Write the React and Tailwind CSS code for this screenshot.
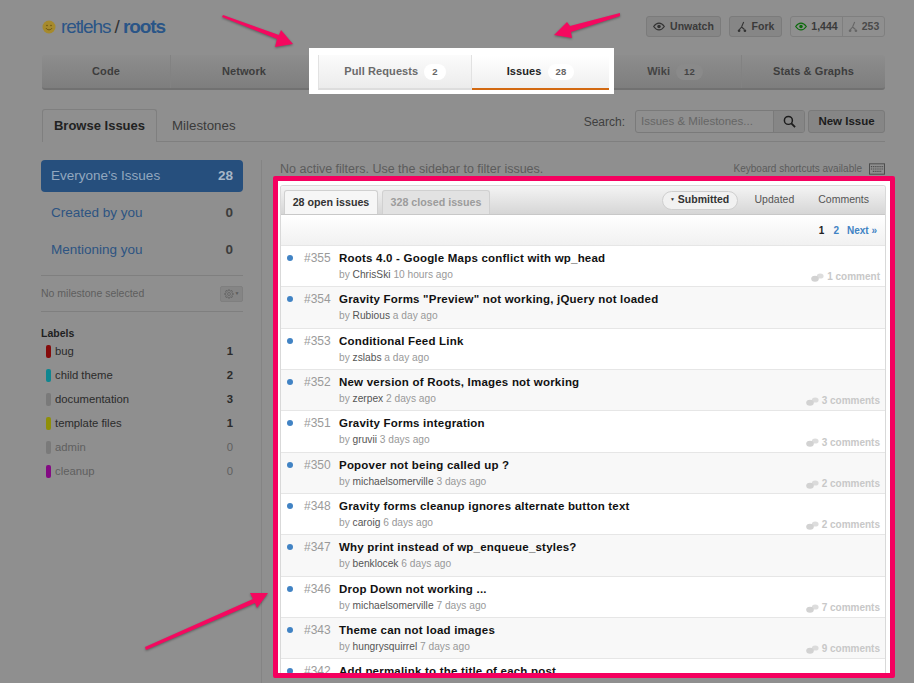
import { GoGear } from 'react-icons/go';

const issues = [
  { num: '#355', title: 'Roots 4.0 - Google Maps conflict with wp_head', by: 'ChrisSki', when: '10 hours ago', comments: '1 comment' },
  { num: '#354', title: 'Gravity Forms "Preview" not working, jQuery not loaded', by: 'Rubious', when: 'a day ago' },
  { num: '#353', title: 'Conditional Feed Link', by: 'zslabs', when: 'a day ago' },
  { num: '#352', title: 'New version of Roots, Images not working', by: 'zerpex', when: '2 days ago', comments: '3 comments' },
  { num: '#351', title: 'Gravity Forms integration', by: 'gruvii', when: '3 days ago', comments: '3 comments' },
  { num: '#350', title: 'Popover not being called up ?', by: 'michaelsomerville', when: '3 days ago', comments: '2 comments' },
  { num: '#348', title: 'Gravity forms cleanup ignores alternate button text', by: 'caroig', when: '6 days ago', comments: '2 comments' },
  { num: '#347', title: 'Why print instead of wp_enqueue_styles?', by: 'benklocek', when: '6 days ago' },
  { num: '#346', title: 'Drop Down not working ...', by: 'michaelsomerville', when: '7 days ago', comments: '7 comments' },
  { num: '#343', title: 'Theme can not load images', by: 'hungrysquirrel', when: '7 days ago', comments: '9 comments' },
  { num: '#342', title: 'Add permalink to the title of each post.' },
];

const labels = [
  { name: 'bug', count: 1, bar: 'bg-[#850b0b]' },
  { name: 'child theme', count: 2, bar: 'bg-[#0f8690]' },
  { name: 'documentation', count: 3, bar: 'bg-[#7a7a7a]' },
  { name: 'template files', count: 1, bar: 'bg-[#8f8f08]' },
  { name: 'admin', count: 0, bar: 'bg-[#7a7a7a]' },
  { name: 'cleanup', count: 0, bar: 'bg-[#830a83]' },
];

function EyeIcon({ className }) {
  return (
    <svg viewBox="0 0 14 10" className={className} fill="none">
      <path d="M0.8 5C3 1.8 5 1 7 1s4 .8 6.2 4C11 8.2 9 9 7 9S3 8.2.8 5z" stroke="currentColor" strokeWidth="1.4" />
      <circle cx="7" cy="5" r="2" fill="currentColor" />
    </svg>
  );
}

function ForkIcon({ className }) {
  return (
    <svg viewBox="0 0 12 14" className={className} fill="none" stroke="currentColor">
      <path d="M8 1 5.5 7 2.5 10.5M5.5 7 9 10" strokeWidth="1.3" />
      <circle cx="2.5" cy="11.5" r="1.6" fill="currentColor" stroke="none" />
      <circle cx="9.5" cy="11.5" r="1.6" fill="currentColor" stroke="none" />
    </svg>
  );
}

function CommentIcon() {
  return (
    <svg viewBox="0 0 13 9" className="w-[13px] h-[9px] text-[#d2d2d2]" fill="currentColor">
      <ellipse cx="4" cy="5.8" rx="3.8" ry="3" />
      <ellipse cx="9.2" cy="3" rx="3.4" ry="2.6" opacity="0.75" />
    </svg>
  );
}

function Badge({ children, dim }) {
  return (
    <span className={`ml-[6px] h-[16px] px-[8px] rounded-full text-[9.5px] font-bold leading-[16px] ${dim ? 'bg-[#8a8a8a] text-[#444444]' : 'bg-white text-[#666666]'}`}>
      {children}
    </span>
  );
}

function NavTab({ width, children, last }) {
  return (
    <div className={`flex items-center justify-center h-full text-[11px] tracking-[0.1px] font-bold text-[#3d3d3d] ${width} ${last ? '' : 'border-r border-[#828282]'}`}>
      {children}
    </div>
  );
}

function SideLink({ label, count, active }) {
  return (
    <div className={`flex items-center justify-between h-[32px] px-[10px] rounded-[4px] text-[13.5px] ${active ? 'bg-[#264f7d] text-[#93a8bf]' : 'text-[#2d5482]'}`}>
      <span>{label}</span>
      <span className={`font-bold ${active ? 'text-[#a7b6c7]' : 'text-[#3c3c3c]'}`}>{count}</span>
    </div>
  );
}

function IssueRow({ issue, odd }) {
  return (
    <div className={`flex h-[41.35px] shrink-0 border-b border-[#e6e6e6] ${odd ? 'bg-[#f8f8f8]' : 'bg-white'}`}>
      <div className="w-[23px] shrink-0 pl-[6px] pt-[9px]">
        <div className="w-[6px] h-[6px] rounded-full bg-[#4183c4]" />
      </div>
      <div className="w-[35px] shrink-0 pt-[4px] text-[12px] leading-[16px] text-[#9a9a9a]">{issue.num}</div>
      <div className="flex-1 pt-[4px]">
        <div className="text-[11.5px] leading-[17px] font-bold text-[#111111] tracking-[0.21px]">{issue.title}</div>
        {issue.by && (
          <div className="text-[10.2px] leading-[15px] text-[#999999]">
            by <span className="text-[#555555]">{issue.by}</span> {issue.when}
          </div>
        )}
      </div>
      {issue.comments && (
        <div className="self-end pb-[2px] pr-[5px] flex items-center gap-[3px] text-[10px] leading-[14px] font-bold text-[#c8c8c8]">
          <CommentIcon />
          {issue.comments}
        </div>
      )}
    </div>
  );
}

export default function App() {
  return (
    <div className="relative w-[914px] h-[683px] overflow-hidden bg-[#8f8f8f] font-['Liberation_Sans',Arial,sans-serif]">
      <div className="pl-[42px] pr-[29px]">
        {/* repo title and buttons */}
        <div className="flex items-center justify-between pt-[16px] h-[37px]">
          <div className="flex items-center">
            <svg viewBox="0 0 14 14" className="w-[14px] h-[14px]">
              <circle cx="7" cy="7" r="6.5" fill="#a68a2c" />
              <path d="M4 8c1 2.4 5 2.4 6 0" stroke="#6b5512" strokeWidth="1" fill="none" />
              <circle cx="5" cy="5.5" r="0.8" fill="#6b5512" />
              <circle cx="9" cy="5.5" r="0.8" fill="#6b5512" />
            </svg>
            <div className="ml-[5px] text-[19px] leading-[22px] tracking-[-1.1px] text-[#2a5587]">
              retlehs <span className="text-[#333333]">/</span> <span className="font-bold">roots</span>
            </div>
          </div>
          <div className="flex items-center text-[10.5px] font-bold text-[#3a3a3a]">
            <div className="flex items-center gap-[5px] h-[21px] w-[75px] justify-center rounded-[3px] border border-[#7b7b7b] bg-[#868686]">
              <EyeIcon className="w-[12px] h-[9px] text-[#333333]" />
              Unwatch
            </div>
            <div className="flex items-center gap-[5px] h-[21px] w-[53px] justify-center rounded-[3px] border border-[#7b7b7b] bg-[#868686] ml-[8px]">
              <ForkIcon className="w-[10px] h-[12px] text-[#333333]" />
              Fork
            </div>
            <div className="flex items-center h-[21px] w-[95px] rounded-[3px] border border-[#7f7f7f] ml-[8px]">
              <div className="flex items-center justify-center gap-[4px] w-[52px] h-full border-r border-[#7f7f7f]">
                <EyeIcon className="w-[12px] h-[9px] text-[#0c6b0c]" />
                1,444
              </div>
              <div className="flex items-center justify-center gap-[4px] flex-1 text-[#4a4a4a]">
                <ForkIcon className="w-[10px] h-[12px] text-[#666666]" />
                253
              </div>
            </div>
          </div>
        </div>

        {/* main nav */}
        <div className="flex h-[35px] mt-[18px] rounded-[3px] border-b-2 border-[#717171] bg-gradient-to-b from-[#8d8d8d] to-[#7e7e7e]">
          <NavTab width="w-[129px]">Code</NavTab>
          <NavTab width="w-[147px]">Network</NavTab>
          <div className="relative z-10 flex self-start h-[46px] -mt-[7px] -ml-[9px] -mr-[5px] pt-[7px] pl-[9px] pr-[5px] bg-white">
            <div className="flex items-center justify-center w-[154px] h-[35px] text-[11px] tracking-[0.1px] font-bold text-[#6a6a6a] bg-gradient-to-b from-[#fbfbfb] to-[#ececec] border-x border-[#e2e2e2] border-b-2 border-b-[#dddddd]">
              Pull Requests
              <Badge>2</Badge>
            </div>
            <div className="flex items-center justify-center w-[137px] h-[35px] text-[11px] tracking-[0.1px] font-bold text-[#222222] bg-gradient-to-b from-[#ffffff] to-[#efefef] border-b-2 border-[#d26911]">
              Issues
              <Badge>28</Badge>
            </div>
          </div>
          <NavTab width="w-[133px]">
            <span className="text-[#444444]">Wiki</span>
            <Badge dim>12</Badge>
          </NavTab>
          <NavTab width="flex-1" last>Stats &amp; Graphs</NavTab>
        </div>

        {/* sub tabs and search */}
        <div className="flex items-end h-[52px] border-b border-[#7f7f7f]">
          <div className="flex items-center justify-center w-[115px] h-[33px] -mb-px border border-b-0 border-[#7f7f7f] bg-[#8f8f8f] rounded-t-[3px] text-[13px] font-bold text-[#222222]">
            Browse Issues
          </div>
          <div className="ml-[15px] h-[32px] leading-[34px] text-[13.3px] text-[#3a3a3a]">Milestones</div>
          <div className="ml-auto self-start mt-[20px] flex items-center">
            <span className="mr-[10px] text-[12px] text-[#3f3f3f]">Search:</span>
            <div className="flex w-[170px] h-[23px] rounded-[3px] border border-[#7a7a7a] overflow-hidden">
              <div className="flex-1 pl-[5px] text-[11.5px] leading-[21px] text-[#666666]">Issues &amp; Milestones...</div>
              <div className="flex items-center justify-center w-[31px] border-l border-[#7a7a7a] bg-[#868686]">
                <svg viewBox="0 0 14 14" className="w-[13px] h-[13px]" fill="none" stroke="#1c1c1c">
                  <circle cx="5.8" cy="5.8" r="4.3" strokeWidth="1.6" />
                  <path d="M9 9l4 4" strokeWidth="2" />
                </svg>
              </div>
            </div>
            <div className="ml-[3px] flex items-center justify-center w-[77px] h-[23px] rounded-[3px] border border-[#7a7a7a] bg-[#868686] text-[11.5px] font-bold text-[#1c1c1c]">
              New Issue
            </div>
          </div>
        </div>
      </div>

      <div className="flex pl-[41px] pt-[18px]">
        {/* sidebar */}
        <div className="w-[202px] shrink-0">
          <SideLink label="Everyone's Issues" count="28" active />
          <div className="mt-[5px]"><SideLink label="Created by you" count="0" /></div>
          <div className="mt-[5px]"><SideLink label="Mentioning you" count="0" /></div>
          <div className="mt-[9px] flex items-center justify-between h-[37px] border-y border-[#7f7f7f] text-[10.5px] text-[#5e5e5e]">
            No milestone selected
            <div className="flex items-center justify-center gap-[1px] w-[23px] h-[16px] rounded-[2px] border border-[#7f7f7f] bg-[#858585] text-[#5a5a5a]">
              <GoGear className="w-[10px] h-[10px]" />
              <span className="text-[5px]">▼</span>
            </div>
          </div>
          <div className="mt-[14px] text-[10.5px] leading-[14px] font-bold text-[#1f1f1f]">Labels</div>
          <div className="-mt-px">
            {labels.map((label) => (
              <div key={label.name} className="flex items-center h-[24px] text-[11.3px]">
                <span className={`ml-[5px] w-[5px] h-[13px] rounded-[2px] ${label.bar}`} />
                <span className={`ml-[4px] flex-1 ${label.count ? 'text-[#2b2b2b]' : 'text-[#5f5f5f]'}`}>{label.name}</span>
                <span className={`mr-[10px] ${label.count ? 'font-bold text-[#2b2b2b]' : 'text-[#5f5f5f]'}`}>{label.count}</span>
              </div>
            ))}
          </div>
        </div>

        <div className="ml-[18px] w-px h-[540px] bg-[#848484]" />

        {/* issues column */}
        <div className="ml-[18px] flex flex-col">
          <div className="flex items-center justify-between w-[605px] h-[17px] text-[#5c5c5c]">
            <span className="text-[12.5px] pt-[1px]">No active filters. Use the sidebar to filter issues.</span>
            <span className="flex items-center gap-[7px] text-[10px]">
              Keyboard shortcuts available
              <svg viewBox="0 0 17 12" className="w-[16px] h-[12px]" fill="none" stroke="#4a4a4a">
                <rect x="0.5" y="0.5" width="16" height="11" />
                <path d="M2 3.5h13M2 6h13M4 8.5h9" strokeWidth="1.2" strokeDasharray="1.2 0.8" />
              </svg>
            </span>
          </div>

          {/* highlighted issue list */}
          <div className="-ml-[7px] mt-[-1px] w-[622px] h-[502px] rounded-[2px] border-[5px] border-[#f5005f] bg-white pl-[2px] pr-[4px] pt-[4px] overflow-hidden">
            <div className="h-full rounded-t-[3px] border-x border-t border-[#d9d9d9] flex flex-col overflow-hidden">
              <div className="flex items-end shrink-0 h-[29px] pl-[3px] pr-[16px] bg-gradient-to-b from-[#f4f4f4] to-[#d6d6d6] border-b border-[#c8c8c8]">
                <div className="flex items-center justify-center w-[94px] h-[24px] rounded-t-[3px] border border-b-0 border-[#d0d0d0] bg-[#f6f6f6] text-[10.7px] font-bold text-[#333333]">
                  28 open issues
                </div>
                <div className="ml-[4px] flex items-center justify-center w-[108px] h-[24px] rounded-t-[3px] border border-b-0 border-[#d0d0d0] bg-[#e2e2e2] text-[10.7px] font-bold text-[#9c9c9c]">
                  328 closed issues
                </div>
                <div className="ml-auto self-center flex items-center text-[10.5px] text-[#555555]">
                  <div className="flex items-center gap-[3px] h-[19px] w-[76px] justify-center rounded-full border border-[#cfcfcf] bg-[#f1f1f1] font-bold text-[#333333]">
                    <span className="text-[5px]">▼</span>
                    Submitted
                  </div>
                  <span className="ml-[17px]">Updated</span>
                  <span className="ml-[24px]">Comments</span>
                </div>
              </div>
              <div className="flex items-center justify-end shrink-0 h-[31px] pr-[8px] bg-gradient-to-b from-[#ffffff] to-[#f1f1f1] border-b border-[#e6e6e6] text-[10px] font-bold text-[#4183c4]">
                <span className="text-[#222222]">1</span>
                <span className="ml-[9px]">2</span>
                <span className="ml-[8px]">Next »</span>
              </div>
              {issues.map((issue, i) => (
                <IssueRow key={issue.num} issue={issue} odd={i % 2 === 1} />
              ))}
            </div>
          </div>
        </div>
      </div>

      {/* annotation arrows */}
      <svg viewBox="0 0 914 683" className="absolute inset-0 w-[914px] h-[683px] pointer-events-none z-20 drop-shadow-[0_1px_1px_rgba(0,0,0,0.35)]" fill="#f5085f">
        <polygon points="223,15 279,35 281,30 293,44 275,47 277,39 222,17" />
        <polygon points="620,13 570,26 567,22 554,35 572,38 571,32 620,16" />
        <polygon points="145,647 253,599 250,593 268,593 257,608 255,603 146,650" />
      </svg>
    </div>
  );
}
